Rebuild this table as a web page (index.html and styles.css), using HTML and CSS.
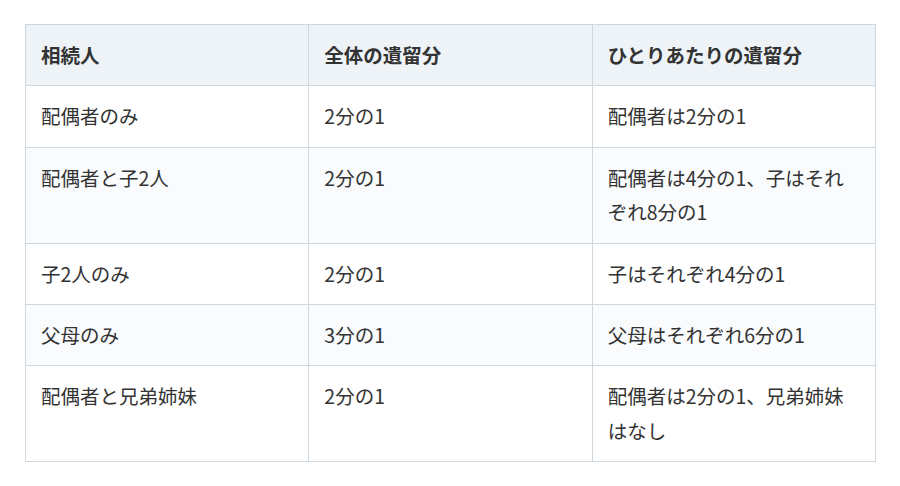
FILE: index.html
```html
<!DOCTYPE html>
<html lang="ja">
<head>
<meta charset="utf-8">
<link rel="stylesheet" href="styles.css">
</head>
<body>
<div class="wrap">
<table class="tbl">
  <thead>
    <tr><th>相続人</th><th>全体の遺留分</th><th>ひとりあたりの遺留分</th></tr>
  </thead>
  <tbody>
    <tr><td>配偶者のみ</td><td>2分の1</td><td>配偶者は2分の1</td></tr>
    <tr><td>配偶者と子2人</td><td>2分の1</td><td>配偶者は4分の1、子はそれぞれ8分の1</td></tr>
    <tr><td>子2人のみ</td><td>2分の1</td><td>子はそれぞれ4分の1</td></tr>
    <tr><td>父母のみ</td><td>3分の1</td><td>父母はそれぞれ6分の1</td></tr>
    <tr><td>配偶者と兄弟姉妹</td><td>2分の1</td><td>配偶者は2分の1、兄弟姉妹はなし</td></tr>
  </tbody>
</table>
</div>
</body>
</html>
```
FILE: styles.css
```css
html, body {
  margin: 0;
  padding: 0;
  background: #ffffff;
}
body {
  font-family: "Noto Sans CJK JP", "Noto Sans", sans-serif;
  color: #333333;
}
.wrap {
  padding: 24px 24px 0 25px;
}
.tbl {
  width: 851px;
  border-collapse: collapse;
  table-layout: fixed;
  font-size: 19.5px;
  line-height: 34.4px;
}
.tbl th, .tbl td {
  border: 1px solid #cfd7df;
  padding: 13px 15px;
  text-align: left;
  vertical-align: top;
}
.tbl th {
  background: #eef3f8;
  font-weight: 700;
}
.tbl tbody tr:nth-child(even) td {
  background: #f9fbfd;
}
```
